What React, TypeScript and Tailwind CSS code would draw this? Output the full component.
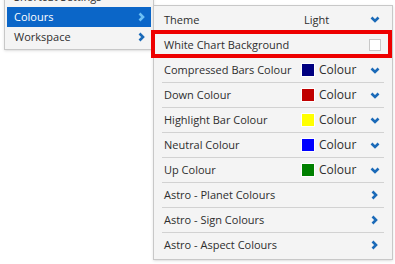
import React from 'react';

const ChevronDown = () => (
  <svg width="10" height="7" viewBox="0 0 10 7" className="text-[#1b6ab8]">
    <polyline points="1.5,1.5 5,5 8.5,1.5" fill="none" stroke="currentColor" strokeWidth="2.6" />
  </svg>
);

const ChevronRight = ({ className = 'text-[#1b6ab8]' }: { className?: string }) => (
  <svg width="7" height="10" viewBox="0 0 7 10" className={className}>
    <polyline points="1.5,1.5 5,5 1.5,8.5" fill="none" stroke="currentColor" strokeWidth="2.6" />
  </svg>
);

const colourRows = [
  { label: 'Compressed Bars Colour', colour: 'bg-[#000080]' },
  { label: 'Down Colour', colour: 'bg-[#c00000]' },
  { label: 'Highlight Bar Colour', colour: 'bg-[#ffff00]' },
  { label: 'Neutral Colour', colour: 'bg-[#0000ff]' },
  { label: 'Up Colour', colour: 'bg-[#008000]' },
];

const astroRows = ['Astro - Planet Colours', 'Astro - Sign Colours', 'Astro - Aspect Colours'];

export default function App() {
  return (
    <div className="relative w-[395px] h-[264px] overflow-hidden bg-white text-[11px] leading-[14px] text-[#2e2e2e] whitespace-nowrap font-['Open_Sans',sans-serif]">
      <div className="flex items-start">
        <div className="ml-[4px] -mt-[16px] w-[150px] shrink-0 border border-[#c8c8c8] bg-[#f4f4f4] p-[2px] shadow-sm">
          <div className="flex h-[20px] items-center justify-between pl-[7px] pr-[6px]">
            <span>Shortcut Settings</span>
          </div>
          <div className="flex h-[20px] items-center justify-between bg-[#0b66c8] pl-[7px] pr-[6px] text-white">
            <span>Colours</span>
            <ChevronRight className="text-[#6ec0f5]" />
          </div>
          <div className="flex h-[20px] items-center justify-between pl-[7px] pr-[6px]">
            <span>Workspace</span>
            <ChevronRight />
          </div>
        </div>

        <div className="mt-[5px] -ml-[1px] w-[240px] shrink-0 border border-[#c8c8c8] bg-[#f4f4f4] px-[8px] pt-[1px] pb-[2px] shadow-sm">
          <div className="flex h-[25px] items-center pl-[2px] pr-[4px]">
            <span className="flex-1">Theme</span>
            <span className="w-[66px]">Light</span>
            <ChevronDown />
          </div>
          <div className="flex h-[25px] items-center border-t border-[#d2d2d2] pl-[2px] pr-[3px]">
            <span className="flex-1">White Chart Background</span>
            <span className="h-[12px] w-[12px] border border-[#c8c8c8] bg-white" />
          </div>
          {colourRows.map((row) => (
            <div key={row.label} className="flex h-[25px] items-center border-t border-[#d2d2d2] pl-[2px] pr-[4px]">
              <span className="flex-1">{row.label}</span>
              <span className={`mr-[4px] mt-[-1px] h-[14px] w-[14px] border border-white ${row.colour}`} />
              <span className="w-[51px] text-[12px]">Colour</span>
              <ChevronDown />
            </div>
          ))}
          {astroRows.map((label) => (
            <div key={label} className="flex h-[25px] items-center border-t border-[#d2d2d2] pl-[2px] pr-[6px]">
              <span className="flex-1">{label}</span>
              <ChevronRight />
            </div>
          ))}
        </div>
      </div>

      <div className="absolute left-[151px] top-[30px] h-[28px] w-[241px] border-[4px] border-[#ee0000]" />
    </div>
  );
}
